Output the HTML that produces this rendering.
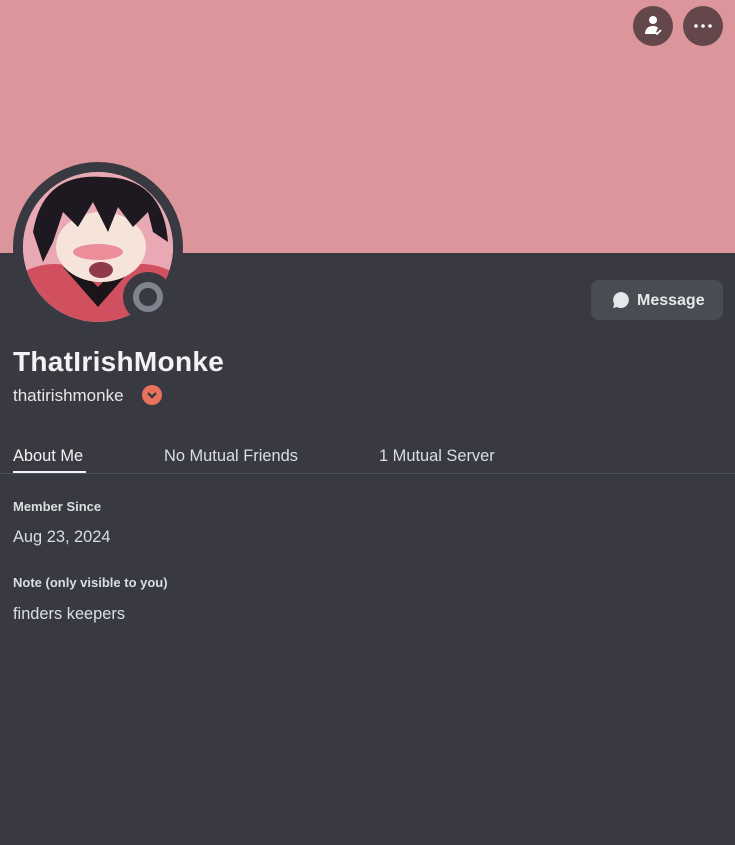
<!DOCTYPE html>
<html><head><style>
*{margin:0;padding:0;box-sizing:border-box}
body{width:735px;height:845px;background:#393a41;font-family:"Liberation Sans",sans-serif;position:relative;overflow:hidden;color:#dbdee1}
.banner{position:absolute;left:0;top:0;width:735px;height:253px;background:#dc959b}
.btn{position:absolute;top:6px;width:40px;height:40px;border-radius:50%;background:#63474a}
.av{position:absolute;left:13px;top:162px;width:170px;height:170px;border-radius:50%;background:#393a41}
.avi{position:absolute;left:10px;top:10px;width:150px;height:150px;border-radius:50%;overflow:hidden;background:#f0d6d6}
.st{position:absolute;left:123px;top:272px;width:50px;height:50px;border-radius:50%;background:#393a41}
.st div{position:absolute;left:10px;top:10px;width:30px;height:30px;border-radius:50%;border:6px solid #80848e}
.msg{position:absolute;left:591px;top:280px;width:132px;height:40px;border-radius:8px;background:#4a4c54;color:#e6e7ea;font-size:16px;font-weight:bold;line-height:41px;padding-left:46px}
.name{position:absolute;left:13px;top:346px;font-size:28px;font-weight:bold;color:#f2f3f5;letter-spacing:0.3px}
.user{position:absolute;left:13px;top:386px;font-size:17px;color:#e6e7ea}
.tab{position:absolute;top:447px;font-size:16.4px;color:#dbdee1}
.line{position:absolute;left:0;top:473px;width:735px;height:1px;background:#4e5058}
.h{position:absolute;left:13px;font-size:13px;font-weight:bold;color:#dbdee1}
.v{position:absolute;left:13px;font-size:16.4px;color:#dbdee1}
</style></head><body>
<div class="banner"></div>
<div class="btn" style="left:633px"><svg width="40" height="40" viewBox="0 0 40 40"><circle cx="20" cy="14" r="4" fill="#fff"/><path d="M12 28c0-5 3-8 8-8 3 0 4 1 5 2l-3 6z" fill="#fff"/><path d="M22 26l2 2 4-4" stroke="#fff" stroke-width="1.8" fill="none"/></svg></div>
<div class="btn" style="left:683px"><svg width="40" height="40"><circle cx="13" cy="20" r="1.8" fill="#fff"/><circle cx="20" cy="20" r="1.8" fill="#fff"/><circle cx="27" cy="20" r="1.8" fill="#fff"/></svg></div>
<div class="av"><div class="avi"><svg width="150" height="150" viewBox="0 0 150 150">
<rect width="150" height="150" fill="#e8a9b4"/>
<path d="M0 100 Q40 80 75 110 Q110 80 150 100 V150 H0z" fill="#d0505f"/>
<path d="M40 95 L75 135 L110 95 L90 100 L75 115 L60 100z" fill="#1b1418"/>
<ellipse cx="78" cy="75" rx="45" ry="35" fill="#f6e3da"/>
<path d="M10 60 Q20 0 80 5 Q140 5 145 70 L130 60 L125 40 L110 55 L95 35 L85 60 L70 30 L55 55 L40 40 L30 70 L20 90z" fill="#1e1820"/>
<ellipse cx="75" cy="80" rx="25" ry="8" fill="#eb8e9a"/>
<ellipse cx="78" cy="98" rx="12" ry="8" fill="#8e3a4a"/>
</svg></div></div>
<div class="st"><div></div></div>
<div class="msg"><svg style="position:absolute;left:21px;top:11px" width="18" height="18" viewBox="0 0 18 18"><path d="M9 1a8 8 0 1 1-4 15L1 17l1.2-4A8 8 0 0 1 9 1z" fill="#e6e7ea"/></svg>Message</div>
<div class="name">ThatIrishMonke</div>
<div class="user">thatirishmonke</div>
<svg style="position:absolute;left:142px;top:385px" width="20" height="20"><circle cx="10" cy="10" r="10" fill="#e8735a"/><path d="M6 8l4 4 4-4" stroke="#393a41" stroke-width="2.4" fill="none"/></svg>
<div class="tab" style="left:13px;color:#f2f3f5">About Me</div>
<div style="position:absolute;left:13px;top:471px;width:73px;height:2px;background:#f2f3f5"></div>
<div class="tab" style="left:164px">No Mutual Friends</div>
<div class="tab" style="left:379px">1 Mutual Server</div>
<div class="line"></div>
<div class="h" style="top:499px">Member Since</div>
<div class="v" style="top:528px">Aug 23, 2024</div>
<div class="h" style="top:575px">Note (only visible to you)</div>
<div class="v" style="top:605px">finders keepers</div>
</body></html>
